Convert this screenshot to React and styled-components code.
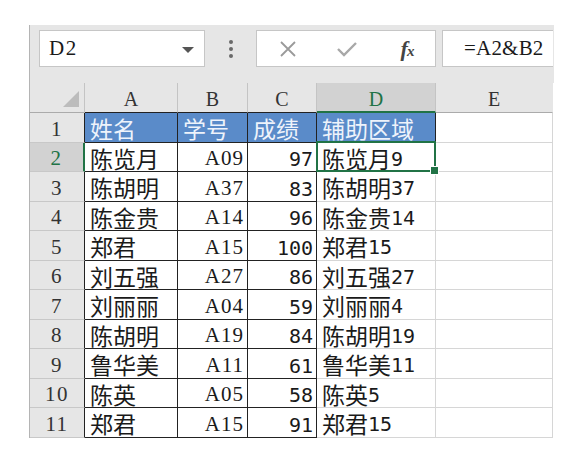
import React from "react";
import styled, { createGlobalStyle } from "styled-components";

const GlobalStyle = createGlobalStyle`
  html, body {
    margin: 0;
    padding: 0;
    background: #ffffff;
  }
`;

const columns = ["A", "B", "C", "D", "E"];

const data = [
  ["陈览月", "A09", "97", "陈览月", "9"],
  ["陈胡明", "A37", "83", "陈胡明", "37"],
  ["陈金贵", "A14", "96", "陈金贵", "14"],
  ["郑君", "A15", "100", "郑君", "15"],
  ["刘五强", "A27", "86", "刘五强", "27"],
  ["刘丽丽", "A04", "59", "刘丽丽", "4"],
  ["陈胡明", "A19", "84", "陈胡明", "19"],
  ["鲁华美", "A11", "61", "鲁华美", "11"],
  ["陈英", "A05", "58", "陈英", "5"],
  ["郑君", "A15", "91", "郑君", "15"],
];

const GREEN = "#217346";
const GRID = "#d6d6d6";
const INK = "#1a1a1a";
const SERIF = `"Liberation Serif", "Noto Sans CJK SC", serif`;

const Frame = styled.div`
  margin: 25px 0 0 29px;
  width: 524px;
  border-left: 1px solid #b4b4b4;
  background: #ffffff;
`;

const Toolbar = styled.div`
  display: flex;
  align-items: flex-start;
  height: 58px;
  box-sizing: border-box;
  padding: 5px 0 0 9px;
  background: #e6e6e6;
`;

const NameBox = styled.div`
  width: 166px;
  height: 37px;
  box-sizing: border-box;
  border: 1px solid #c6c6c6;
  background: #fff;
  display: flex;
  align-items: center;
  justify-content: space-between;
  padding: 0 10px 0 9px;
  font-family: ${SERIF};
  font-size: 21px;
  letter-spacing: 1.5px;
  color: ${INK};
`;

const Caret = styled.span`
  width: 0;
  height: 0;
  border-left: 6px solid transparent;
  border-right: 6px solid transparent;
  border-top: 6px solid #555;
  margin-top: 2px;
`;

const Dots = styled.div`
  width: 51px;
  height: 37px;
  display: flex;
  flex-direction: column;
  align-items: center;
  justify-content: center;
  gap: 3px;
  span {
    width: 4px;
    height: 4px;
    border-radius: 50%;
    background: #6a6a6a;
  }
`;

const FxBox = styled.div`
  width: 180px;
  height: 37px;
  box-sizing: border-box;
  border: 1px solid #c6c6c6;
  background: #fff;
  display: grid;
  grid-template-columns: 58px 60px 60px;
  align-items: center;
  justify-items: center;
  padding-left: 2px;
`;

const Fx = styled.span`
  font-family: "Liberation Serif", serif;
  font-style: italic;
  font-weight: bold;
  font-size: 22px;
  line-height: 1;
  color: #444;
  letter-spacing: -1px;
  small {
    font-size: 15px;
  }
`;

const FormulaBox = styled.div`
  width: 111px;
  height: 37px;
  margin-left: 6px;
  box-sizing: border-box;
  border: 1px solid #c6c6c6;
  border-right: none;
  background: #fff;
  display: flex;
  align-items: center;
  padding-left: 21px;
  font-family: ${SERIF};
  font-size: 21px;
  letter-spacing: 0.2px;
  color: ${INK};
  white-space: nowrap;
  overflow: hidden;
`;

const Sheet = styled.div`
  display: grid;
  grid-template-columns: 55px 93px 70px 69px 119px 117px;
  grid-template-rows: 30px 30px 29px 30px 29px 30px 29px 30px 29px 30px 29px 30px;
  line-height: 1;
`;

const Corner = styled.div`
  position: relative;
  background: #e6e6e6;
  border-right: 1px solid #c4c4c4;
  border-bottom: 1px solid #ababab;
  box-sizing: border-box;
  &::after {
    content: "";
    position: absolute;
    right: 5px;
    bottom: 5px;
    width: 0;
    height: 0;
    border-left: 16px solid transparent;
    border-bottom: 16px solid #bcbcbc;
  }
`;

const ColHead = styled.div`
  box-sizing: border-box;
  background: ${(p) => (p.$active ? "#d2d2d2" : "#e6e6e6")};
  color: ${(p) => (p.$active ? GREEN : "#333")};
  border-right: 1px solid ${(p) => (p.$last ? "#e6e6e6" : "#c4c4c4")};
  border-bottom: ${(p) =>
    p.$active ? `2px solid ${GREEN}` : `1px solid ${p.$dark ? "#222" : "#ababab"}`};
  display: flex;
  align-items: center;
  justify-content: center;
  font-family: ${SERIF};
  font-size: 20px;
  padding-top: 3px;
`;

const RowHead = styled.div`
  box-sizing: border-box;
  background: ${(p) => (p.$active ? "#d2d2d2" : "#e6e6e6")};
  color: ${(p) => (p.$active ? GREEN : "#333")};
  border-right: ${(p) => (p.$active ? `2px solid ${GREEN}` : "1px solid #222")};
  border-bottom: 1px solid #c8c8c8;
  display: flex;
  align-items: center;
  justify-content: center;
  font-family: ${SERIF};
  font-size: 21px;
  letter-spacing: 1.5px;
  padding-top: 3px;
`;

const Cell = styled.div`
  position: relative;
  box-sizing: border-box;
  background: ${(p) => (p.$head ? "#5a8bc9" : "#fff")};
  color: ${(p) => (p.$head ? "#eef3fb" : INK)};
  border-right: 1px solid ${(p) => (p.$boxed ? "#222" : GRID)};
  border-bottom: 1px solid ${(p) => (p.$boxed ? "#222" : GRID)};
  display: flex;
  align-items: center;
  justify-content: ${(p) => (p.$right ? "flex-end" : "flex-start")};
  padding: ${(p) => (p.$right ? "3px 3px 0 0" : "2px 0 0 5px")};
  font-family: "Noto Sans CJK SC", sans-serif;
  font-size: 23px;
  white-space: nowrap;
  z-index: ${(p) => (p.$selected ? 2 : "auto")};
`;

const Code = styled.span`
  font-family: ${SERIF};
  font-size: 21px;
  letter-spacing: 1px;
`;

const Num = styled.span`
  font-family: "DejaVu Sans Mono", monospace;
  font-size: 20px;
  padding-top: 1px;
`;

const Selection = styled.div`
  position: absolute;
  top: -2px;
  left: -1px;
  right: -1px;
  bottom: -1px;
  border: 2px solid ${GREEN};
  pointer-events: none;
`;

const Handle = styled.div`
  position: absolute;
  right: -5px;
  bottom: -5px;
  width: 7px;
  height: 7px;
  background: ${GREEN};
  border: 1px solid #fff;
`;

const CrossIcon = () => (
  <svg width="18" height="18" viewBox="0 0 18 18">
    <path d="M2 2 L16 16 M16 2 L2 16" stroke="#9a9a9a" strokeWidth="1.8" fill="none" />
  </svg>
);

const CheckIcon = () => (
  <svg width="22" height="18" viewBox="0 0 22 18">
    <path d="M2 9 L8 15 L20 3" stroke="#a8a8a8" strokeWidth="2.4" fill="none" />
  </svg>
);

export default function App() {
  return (
    <>
      <GlobalStyle />
      <Frame>
        <Toolbar>
          <NameBox>
            D2
            <Caret />
          </NameBox>
          <Dots>
            <span />
            <span />
            <span />
          </Dots>
          <FxBox>
            <CrossIcon />
            <CheckIcon />
            <Fx>
              f<small>x</small>
            </Fx>
          </FxBox>
          <FormulaBox>=A2&amp;B2</FormulaBox>
        </Toolbar>
        <Sheet>
          <Corner />
          {columns.map((c, i) => (
            <ColHead key={c} $active={c === "D"} $dark={i < 3} $last={c === "E"}>
              {c}
            </ColHead>
          ))}

          <RowHead>1</RowHead>
          <Cell $head $boxed>姓名</Cell>
          <Cell $head $boxed>学号</Cell>
          <Cell $head $boxed>成绩</Cell>
          <Cell $head $boxed>辅助区域</Cell>
          <Cell />

          {data.map((r, i) => {
            const n = i + 2;
            const selected = n === 2;
            return (
              <React.Fragment key={n}>
                <RowHead $active={selected}>{n}</RowHead>
                <Cell $boxed>{r[0]}</Cell>
                <Cell $boxed $right>
                  <Code>{r[1]}</Code>
                </Cell>
                <Cell $boxed $right>
                  <Num>{r[2]}</Num>
                </Cell>
                <Cell $selected={selected}>
                  {r[3]}
                  <Num>{r[4]}</Num>
                  {selected && (
                    <Selection>
                      <Handle />
                    </Selection>
                  )}
                </Cell>
                <Cell />
              </React.Fragment>
            );
          })}
        </Sheet>
      </Frame>
    </>
  );
}
